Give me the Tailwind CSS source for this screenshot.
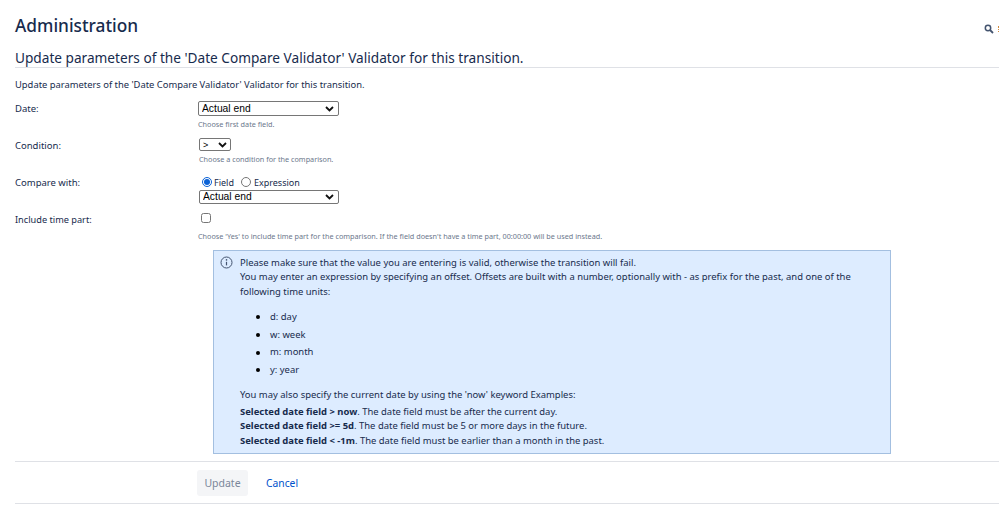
<!DOCTYPE html>
<html lang="en">
  <head>
    <meta charset="UTF-8" />
    <title>Administration</title>
    <script src="https://cdn.jsdelivr.net/npm/@tailwindcss/browser@4"></script>
  </head>
  <body class="bg-white h-[508px] w-[999px] overflow-hidden font-['Noto_Sans',sans-serif] text-[#172b4d]">
    <div class="pl-[15px]">
      <!-- Page header -->
      <div class="flex items-center justify-between h-[51px]">
        <h1 class="text-[17.3px] leading-[24px] font-medium">Administration</h1>
        <div class="flex items-center gap-[4px] mt-[7px]">
          <svg width="10" height="10" viewBox="0 0 10 10" fill="none">
            <circle cx="4" cy="4" r="2.7" stroke="#44546f" stroke-width="1.5" />
            <path d="M6 6l3 3" stroke="#44546f" stroke-width="1.8" />
          </svg>
          <span class="w-[1px] h-[6px] border-r border-dotted border-[#d08a3c]"></span>
        </div>
      </div>

      <h2 class="text-[13.65px] leading-[14px] h-[16px] font-normal">Update parameters of the 'Date Compare Validator' Validator for this transition.</h2>
      <div class="h-[1px] bg-[#dfe1e6] mb-[10px]"></div>

      <p class="text-[9.4px] leading-[14px] mb-[9px]">Update parameters of the 'Date Compare Validator' Validator for this transition.</p>

      <!-- Form rows -->
      <div class="flex">
        <label class="w-[183px] text-[9.5px] leading-[16px]">Date:</label>
        <div>
          <div class="relative w-[141px]">
            <select class="block appearance-none w-full h-[15px] pl-[3px] border border-[#767676] rounded-[2px] bg-white text-[10.3px] leading-[13px] font-['Liberation_Sans',sans-serif] text-black">
              <option>Actual end</option>
            </select>
            <svg class="absolute right-[5px] top-[5px]" width="9" height="6" viewBox="0 0 9 6" fill="none"><path d="M1 1l3.5 3.5L8 1" stroke="#111" stroke-width="1.8" /></svg>
          </div>
          <p class="text-[7.25px] leading-[11px] mt-[3px] text-[#6b778c]">Choose first date field.</p>
        </div>
      </div>

      <div class="flex mt-[8px]">
        <label class="w-[184px] text-[9.5px] leading-[16px]">Condition:</label>
        <div>
          <div class="relative w-[32px]">
            <select class="block appearance-none w-full h-[13px] pl-[3px] border border-[#767676] rounded-[2px] bg-white text-[9px] font-['Liberation_Sans',sans-serif] text-black">
              <option>&gt;</option>
            </select>
            <svg class="absolute right-[4px] top-[4px]" width="9" height="6" viewBox="0 0 9 6" fill="none"><path d="M1 1l3.5 3.5L8 1" stroke="#111" stroke-width="1.8" /></svg>
          </div>
          <p class="text-[7.25px] leading-[11px] mt-[3px] text-[#6b778c]">Choose a condition for the comparison.</p>
        </div>
      </div>

      <div class="flex mt-[10px]">
        <label class="w-[184px] text-[9.5px] leading-[16px]">Compare with:</label>
        <div>
          <div class="flex items-center h-[14px] pl-[3px] text-[9px] leading-[14px] mt-[1px]">
            <input type="radio" name="cmp" checked class="appearance-auto w-[10px] h-[10px] m-0 -mt-[2px] accent-[#0b62d6]" />
            <span class="ml-[2px]">Field</span>
            <input type="radio" name="cmp" class="appearance-auto w-[10px] h-[10px] m-0 -mt-[2px] ml-[7px]" />
            <span class="ml-[3px]">Expression</span>
          </div>
          <div class="relative w-[140px]">
            <select class="block appearance-none w-full h-[14px] pl-[3px] border border-[#767676] rounded-[2px] bg-white text-[10.3px] leading-[12px] font-['Liberation_Sans',sans-serif] text-black">
              <option>Actual end</option>
            </select>
            <svg class="absolute right-[5px] top-[4px]" width="9" height="6" viewBox="0 0 9 6" fill="none"><path d="M1 1l3.5 3.5L8 1" stroke="#111" stroke-width="1.8" /></svg>
          </div>
        </div>
      </div>

      <div class="flex mt-[8px]">
        <label class="w-[183px] text-[9.2px] leading-[16px]">Include time part:</label>
        <div>
          <input type="checkbox" class="block appearance-auto w-[10px] h-[10px] mt-[1px] ml-[3px]" />
          <p class="text-[7.25px] leading-[11px] mt-[8px] text-[#6b778c]">Choose 'Yes' to include time part for the comparison. If the field doesn't have a time part, 00:00:00 will be used instead.</p>
        </div>
      </div>

      <!-- Info message -->
      <div class="ml-[198px] mt-[8px] w-[678px] h-[204px] bg-[#ddecff] border border-[#a3bfe0] flex pl-[6px] pt-[5px] text-[9.45px] leading-[14.4px]">
        <svg class="shrink-0" width="13" height="13" viewBox="0 0 13 13" fill="none">
          <circle cx="6.5" cy="6.5" r="5.5" stroke="#44546f" stroke-width="1" />
          <path d="M6.5 5.8v3.6" stroke="#44546f" stroke-width="1.2" />
          <circle cx="6.5" cy="3.9" r="0.8" fill="#44546f" />
        </svg>
        <div class="ml-[7px] w-[640px]">
          <p>Please make sure that the value you are entering is valid, otherwise the transition will fail.</p>
          <p>You may enter an expression by specifying an offset. Offsets are built with a number, optionally with - as prefix for the past, and one of the following time units:</p>
          <ul class="mt-[11px] mb-[11px] flex flex-col gap-[3.2px]">
            <li class="flex items-center pl-[16px] gap-[10px]"><span class="w-[4px] h-[4px] rounded-full bg-black"></span>d: day</li>
            <li class="flex items-center pl-[16px] gap-[10px]"><span class="w-[4px] h-[4px] rounded-full bg-black"></span>w: week</li>
            <li class="flex items-center pl-[16px] gap-[10px]"><span class="w-[4px] h-[4px] rounded-full bg-black"></span>m: month</li>
            <li class="flex items-center pl-[16px] gap-[10px]"><span class="w-[4px] h-[4px] rounded-full bg-black"></span>y: year</li>
          </ul>
          <p class="mb-[2px]">You may also specify the current date by using the 'now' keyword Examples:</p>
          <p><b>Selected date field &gt; now</b>. The date field must be after the current day.</p>
          <p><b>Selected date field &gt;= 5d</b>. The date field must be 5 or more days in the future.</p>
          <p><b>Selected date field &lt; -1m</b>. The date field must be earlier than a month in the past.</p>
        </div>
      </div>

      <!-- Actions -->
      <div class="mt-[7px] h-[43px] border-t border-b border-[#dfe1e6] flex items-start pt-[8px] pl-[182px]">
        <button class="w-[51px] h-[26px] pt-[1px] rounded-[3px] bg-[#f4f5f7] text-[10.5px] text-[#7a869a]">Update</button>
        <a class="ml-[18px] mt-[5px] text-[10.3px] leading-[16px] text-[#0052cc]">Cancel</a>
      </div>
    </div>
  </body>
</html>
